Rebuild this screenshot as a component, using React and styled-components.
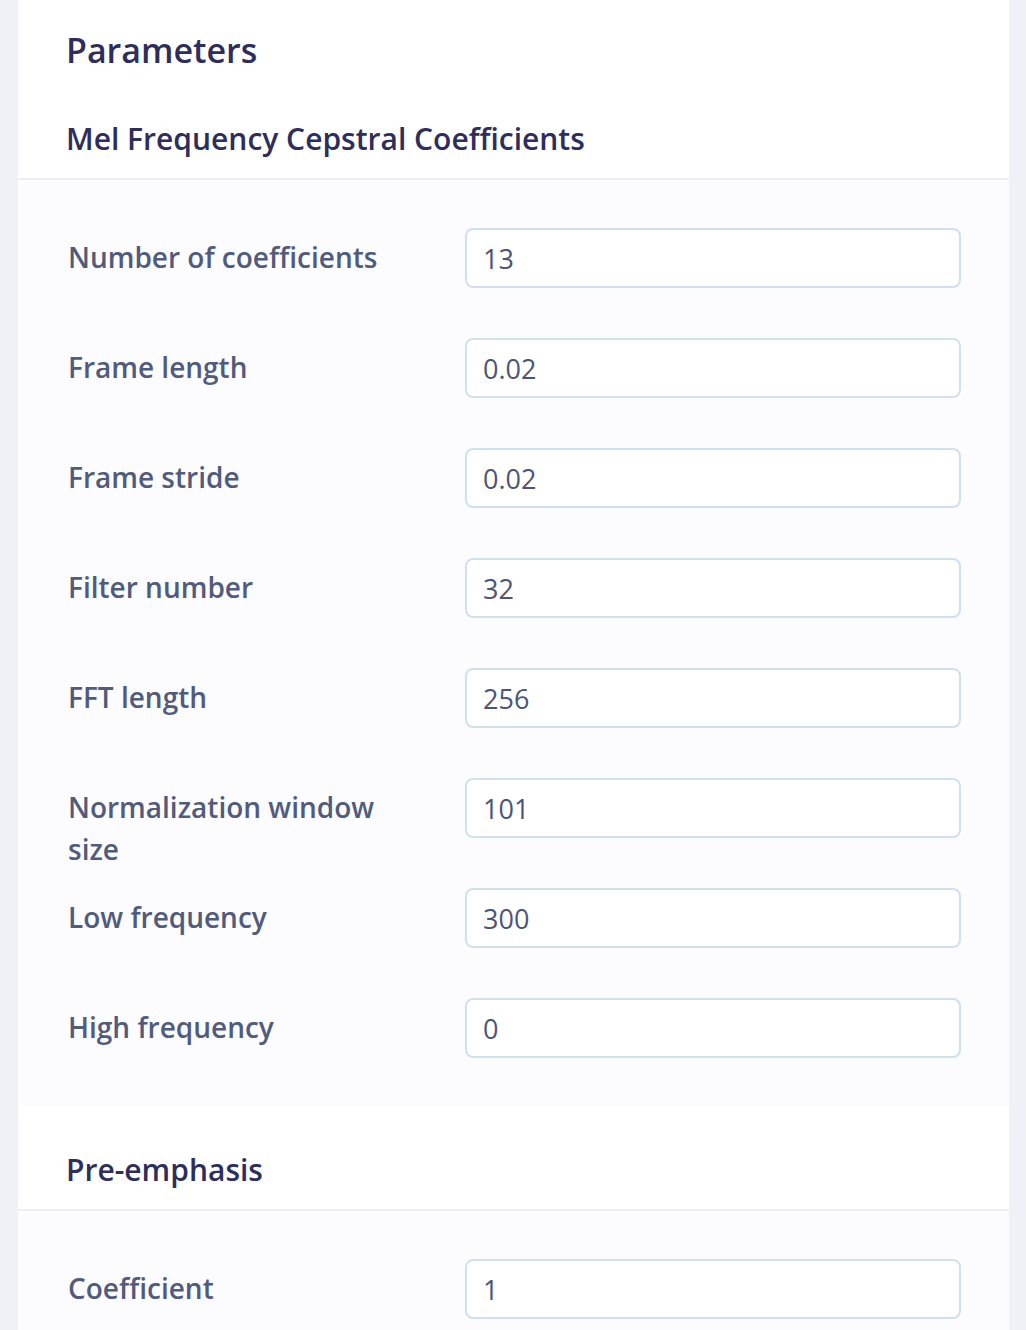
import React from 'react'
import styled, { createGlobalStyle } from 'styled-components'

const GlobalStyle = createGlobalStyle`
    html, body {
        margin: 0;
        padding: 0;
        background: #f0f1f7;
        font-family: "Open Sans", "Noto Sans", sans-serif;
    }
`

const Page = styled.div`
    padding: 0 17px 0 18px;
`

const Card = styled.div`
    background: #fcfcfe;
    min-height: 1330px;
`

const Header = styled.div`
    display: flex;
    flex-direction: column;
    gap: 45px;
    background: #ffffff;
    padding: ${p => p.$top}px 48px 18px;
    border-bottom: 2px solid #efeff3;
`

const Title = styled.h1`
    margin: 0;
    font-size: 34px;
    line-height: 46px;
    font-weight: 600;
    color: #2e2e5c;
`

const SectionTitle = styled.h2`
    margin: 0;
    font-size: 30px;
    line-height: 42px;
    font-weight: 600;
    color: #2e2e5c;
`

const Body = styled.div`
    display: flex;
    flex-direction: column;
    gap: 50px;
    padding: 48px 48px ${p => p.$bottom || 0}px;
`

const Row = styled.div`
    display: grid;
    grid-template-columns: 399px 1fr;
    height: 60px;
`

const Label = styled.label`
    padding: 8px 60px 0 2px;
    font-size: 28px;
    line-height: 42px;
    font-weight: 600;
    color: #505b7d;
`

const Input = styled.input`
    height: 60px;
    box-sizing: border-box;
    border: 2px solid #cfe0f1;
    border-radius: 8px;
    background: #ffffff;
    padding: 0 16px;
    font-family: inherit;
    font-size: 27px;
    color: #4c5577;
    outline: none;
`

const mfcc = [
    ['Number of coefficients', '13'],
    ['Frame length', '0.02'],
    ['Frame stride', '0.02'],
    ['Filter number', '32'],
    ['FFT length', '256'],
    ['Normalization window size', '101'],
    ['Low frequency', '300'],
    ['High frequency', '0'],
]

function App() {
    return (
        <Page>
            <GlobalStyle />
            <Card>
                <Header $top={27}>
                    <Title>Parameters</Title>
                    <SectionTitle>Mel Frequency Cepstral Coefficients</SectionTitle>
                </Header>
                <Body $bottom={48}>
                    {mfcc.map(([label, value]) => (
                        <Row key={label}>
                            <Label>{label}</Label>
                            <Input defaultValue={value} />
                        </Row>
                    ))}
                </Body>
                <Header $top={43}>
                    <SectionTitle>Pre-emphasis</SectionTitle>
                </Header>
                <Body>
                    <Row>
                        <Label>Coefficient</Label>
                        <Input defaultValue="1" />
                    </Row>
                </Body>
            </Card>
        </Page>
    )
}

export default App
